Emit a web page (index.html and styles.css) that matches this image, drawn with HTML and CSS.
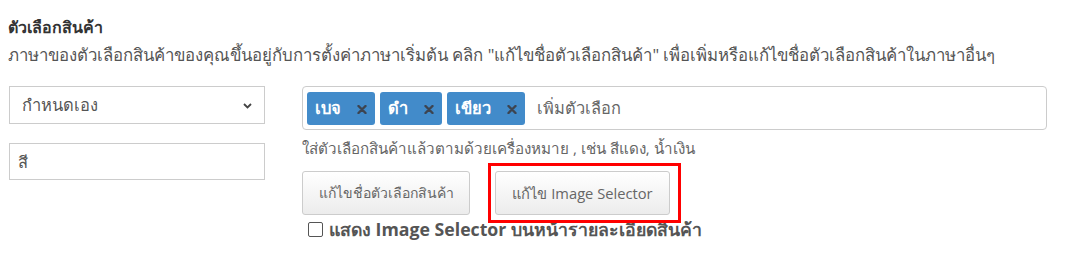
FILE: index.html
```html
<!DOCTYPE html>
<html lang="th">
<head>
<meta charset="utf-8">
<link rel="stylesheet" href="styles.css">
</head>
<body>
<div class="page">
  <div class="title">ตัวเลือกสินค้า</div>
  <div class="desc">ภาษาของตัวเลือกสินค้าของคุณขึ้นอยู่กับการตั้งค่าภาษาเริ่มต้น คลิก "แก้ไขชื่อตัวเลือกสินค้า" เพื่อเพิ่มหรือแก้ไขชื่อตัวเลือกสินค้าในภาษาอื่นๆ</div>
  <div class="row">
    <div class="left">
      <div class="select">
        <span>กำหนดเอง</span>
        <svg class="chev" width="9" height="6" viewBox="0 0 9 6"><path d="M1 1 L4.5 4.5 L8 1" fill="none" stroke="#444" stroke-width="1.8"/></svg>
      </div>
      <div class="input">สี</div>
    </div>
    <div class="right">
      <div class="tags">
        <span class="tag">เบจ <svg class="x" width="10" height="9" viewBox="0 0 10 9"><path d="M1.5 1 L8.5 8 M8.5 1 L1.5 8" stroke="#3d4450" stroke-width="2.4" stroke-linecap="round"/></svg></span>
        <span class="tag">ดำ <svg class="x" width="10" height="9" viewBox="0 0 10 9"><path d="M1.5 1 L8.5 8 M8.5 1 L1.5 8" stroke="#3d4450" stroke-width="2.4" stroke-linecap="round"/></svg></span>
        <span class="tag">เขียว <svg class="x" width="10" height="9" viewBox="0 0 10 9"><path d="M1.5 1 L8.5 8 M8.5 1 L1.5 8" stroke="#3d4450" stroke-width="2.4" stroke-linecap="round"/></svg></span>
        <span class="ph">เพิ่มตัวเลือก</span>
      </div>
      <div class="help">ใส่ตัวเลือกสินค้าแล้วตามด้วยเครื่องหมาย , เช่น สีแดง, น้ำเงิน</div>
      <div class="buttons">
        <button class="btn btn-name">แก้ไขชื่อตัวเลือกสินค้า</button>
        <button class="btn btn-mark">แก้ไข Image Selector</button>
      </div>
      <label class="check"><span class="box"></span>แสดง Image Selector บนหน้ารายละเอียดสินค้า</label>
    </div>
  </div>
</div>
</body>
</html>
```
FILE: styles.css
```css
html, body { margin: 0; padding: 0; background: #fff; }
body { font-family: "Open Sans", "Noto Sans", sans-serif; color: #555; }
.page { padding: 16px 8px 0 8px; }
.title { font-size: 16px; font-weight: 700; color: #333; line-height: 22px; }
.desc { font-size: 16.8px; color: #555; line-height: 22px; margin-top: 6px; white-space: nowrap; }
.row { display: flex; margin-top: 20px; }
.left { width: 256px; margin-left: 1px; display: flex; flex-direction: column; gap: 19px; }
.select { height: 38px; box-sizing: border-box; border: 1px solid #ccc; display: flex; align-items: center; justify-content: space-between; padding: 0 12px 0 12px; font-size: 16.5px; color: #555; }
.chev { margin-top: 1px; }
.input { height: 37px; box-sizing: border-box; border: 1px solid #ccc; display: flex; align-items: center; padding: 0 8px; font-size: 16.5px; color: #555; }
.right { margin-left: 37px; width: 745px; }
.tags { height: 44px; box-sizing: border-box; border: 1px solid #ccc; border-radius: 4px; display: flex; align-items: center; padding: 0 4px; gap: 5px; }
.tag { background: #428bca; color: #fff; font-weight: 700; font-size: 16.5px; height: 33px; border-radius: 3px; display: inline-flex; align-items: center; padding: 0 8px 0 8px; gap: 16px; }
.tag .x { margin-top: 2px; }
.ph { font-size: 16.4px; color: #666; margin-left: 7px; }
.help { font-size: 15.2px; color: #666; margin-top: 7px; line-height: 22px; white-space: nowrap; }
.buttons { display: flex; margin-top: 12px; gap: 25px; }
.btn { height: 44px; box-sizing: border-box; border: 1px solid #ccc; border-radius: 3px; background: linear-gradient(#fff, #ececec); font-family: "Open Sans", "Noto Sans", sans-serif; color: #666; padding: 0 10px; }
.btn-name { width: 168px; font-size: 14px; }
.btn-mark { width: 175px; font-size: 14.7px; position: relative; }
.btn-mark::after { content: ""; position: absolute; left: -8px; right: -12px; top: -9px; bottom: -9px; border: 3px solid #f00; box-sizing: border-box; pointer-events: none; }
.check { display: flex; align-items: center; gap: 6px; margin-left: 6px; margin-top: 3px; font-size: 17.7px; font-weight: 700; color: #555; line-height: 22px; }
.box { width: 13px; height: 13px; border: 1px solid #555; border-radius: 2px; display: inline-block; flex: none; }
```
